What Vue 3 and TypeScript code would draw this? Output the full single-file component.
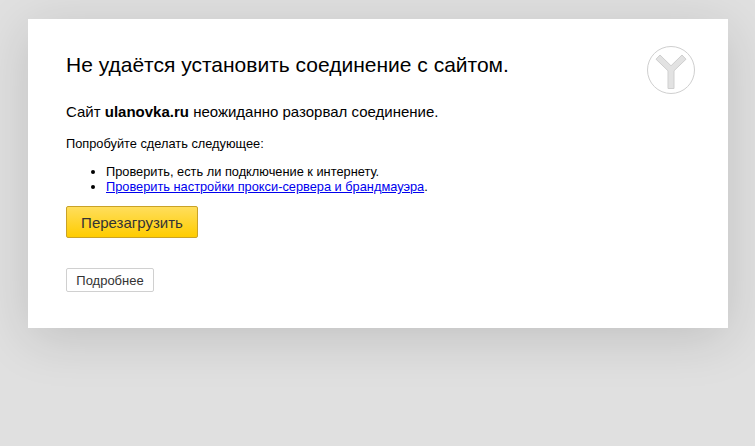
<script setup lang="ts">
const items = ['Проверить, есть ли подключение к интернету.']
</script>

<template>
  <main class="page">
    <section class="card">
      <svg class="logo" width="50" height="50" viewBox="0 0 50 50" aria-hidden="true">
        <circle cx="25" cy="25" r="23.5" fill="#fff" stroke="#cfcfcf" stroke-width="1" />
        <path d="M10 14.2 L14 10 L25 20.8 L36 10 L40 14.2 L28 25.8 L28 43.5 L22 43.5 L22 25.8 Z" fill="#e2e2e2" stroke="#cfcfcf" stroke-width="1" stroke-linejoin="round" />
      </svg>
      <h1 class="title">Не удаётся установить соединение с сайтом.</h1>
      <p class="lead">Сайт <b>ulanovka.ru</b> неожиданно разорвал соединение.</p>
      <p class="hint">Попробуйте сделать следующее:</p>
      <ul class="list">
        <li v-for="item in items" :key="item">{{ item }}</li>
        <li><a href="#">Проверить настройки прокси-сервера и брандмауэра</a>.</li>
      </ul>
      <button class="reload" type="button">Перезагрузить</button>
      <button class="more" type="button">Подробнее</button>
    </section>
  </main>
</template>

<style scoped>
.page {
  height: 446px;
  box-sizing: border-box;
  padding: 19px 27px 0 28px;
  background: #e0e0e0;
  overflow: hidden;
  font-family: "Liberation Sans", Arial, sans-serif;
  color: #000;
}
.card {
  position: relative;
  box-sizing: border-box;
  width: 700px;
  height: 309px;
  padding: 34px 38px 0;
  background: #fff;
  box-shadow: 0 10px 50px rgba(0, 0, 0, 0.14);
}
.logo {
  position: absolute;
  top: 26px;
  right: 32px;
}
.title {
  margin: 0;
  font-size: 21px;
  font-weight: 400;
  line-height: 24px;
}
.lead {
  margin: 26px 0 0;
  font-size: 15px;
  line-height: 18px;
}
.hint {
  margin: 16px 0 0;
  font-size: 12.8px;
  line-height: 14px;
}
.list {
  margin: 13px 0 0;
  padding: 0 0 0 40px;
  font-size: 12.8px;
  line-height: 15px;
}
.list a {
  color: #0000ee;
}
button {
  display: block;
  font-family: inherit;
  color: #333;
  cursor: pointer;
}
.reload {
  margin-top: 12px;
  width: 132px;
  height: 32px;
  font-size: 15px;
  border: 1px solid #c9a227;
  border-radius: 2px;
  background: linear-gradient(#ffde5c, #ffcc00);
}
.more {
  margin-top: 30px;
  width: 88px;
  height: 24px;
  font-size: 13px;
  border: 1px solid #d0d0d0;
  border-radius: 2px;
  background: #fff;
}
</style>
